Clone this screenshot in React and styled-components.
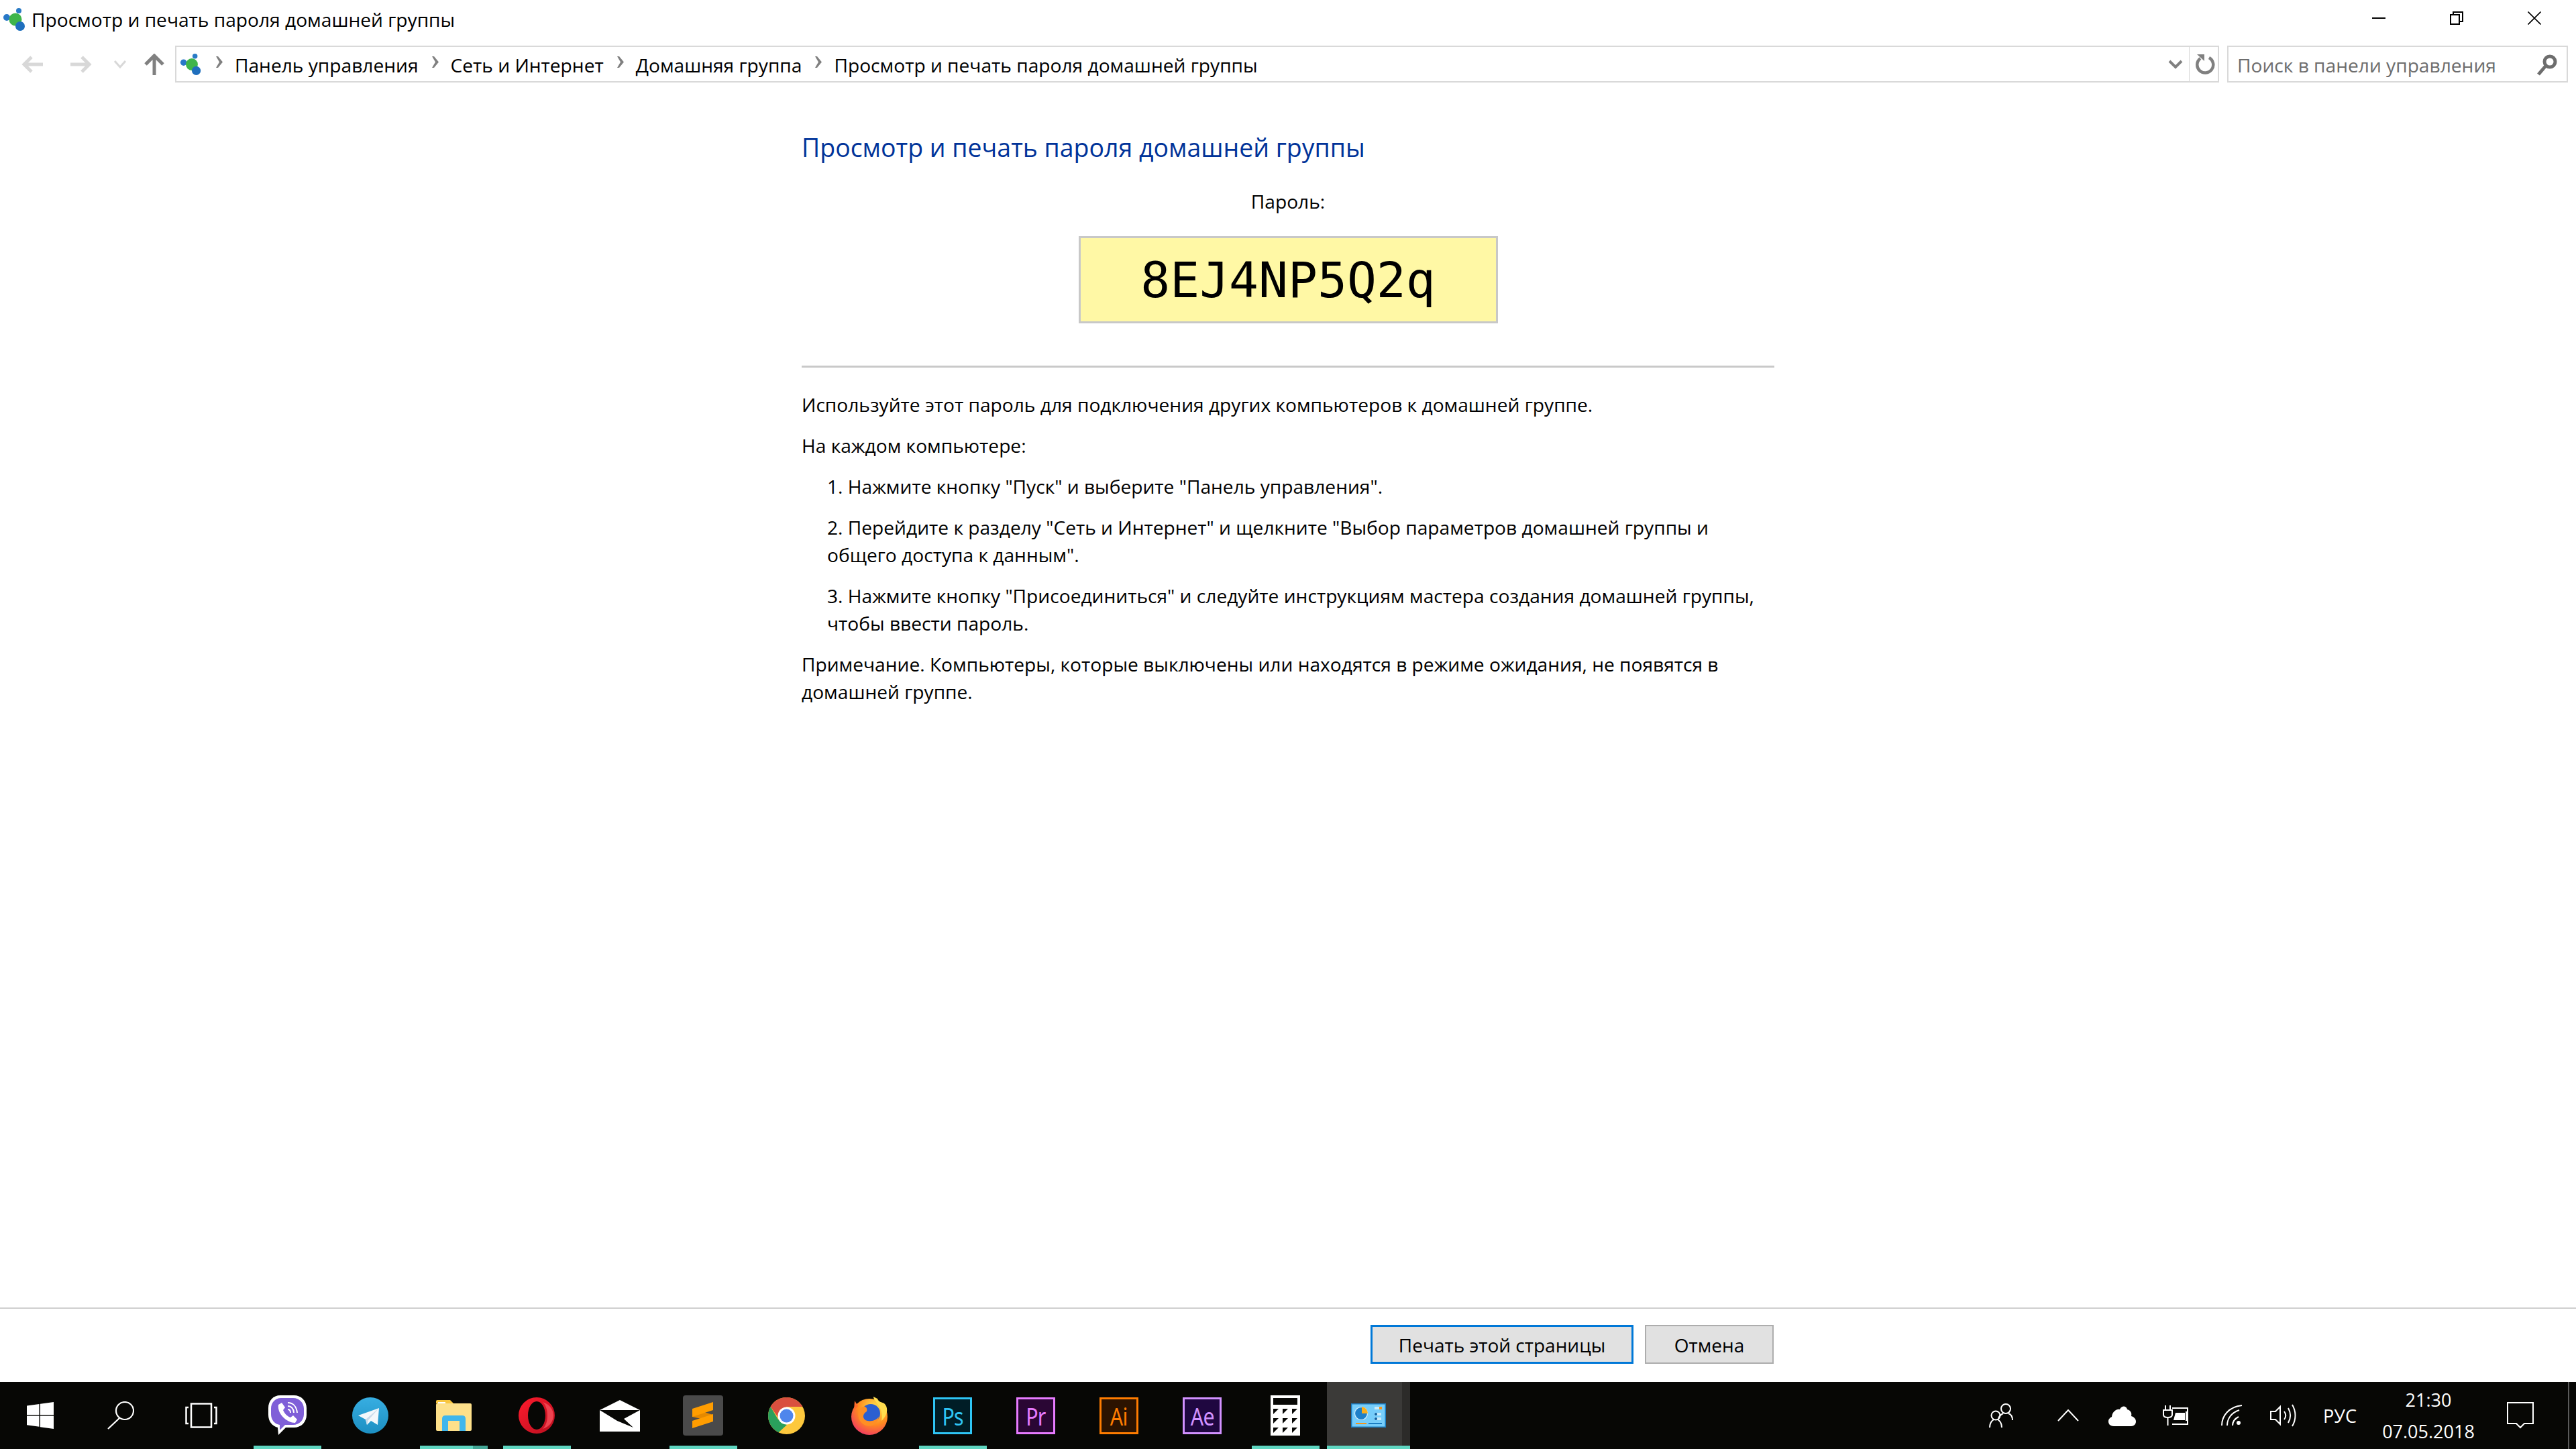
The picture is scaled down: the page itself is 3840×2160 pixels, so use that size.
import styled, { createGlobalStyle } from "styled-components";

const GlobalStyle = createGlobalStyle`
  html, body {
    margin: 0;
    padding: 0;
    background: #fff;
  }
  body {
    font-family: "Open Sans", "Noto Sans", sans-serif;
    color: #000;
  }
`;

const Page = styled.div`
  width: 3840px;
  height: 2160px;
  display: flex;
  flex-direction: column;
  overflow: hidden;
  background: #fff;
`;

const TitleBar = styled.header`
  height: 68px;
  display: flex;
  align-items: flex-start;
  padding-left: 4px;
  box-sizing: border-box;
`;

const TitleIcon = styled.div`
  height: 58px;
  display: flex;
  align-items: center;
`;

const TitleText = styled.div`
  margin-left: 7px;
  height: 58px;
  line-height: 58px;
  font-size: 28.15px;
`;

const WindowButtons = styled.div`
  margin-left: auto;
  display: flex;
  height: 54px;
  padding-right: 4px;
`;

const WindowButton = styled.div`
  width: 116px;
  height: 54px;
  display: flex;
  align-items: center;
  justify-content: center;
`;

const AddressRow = styled.nav`
  height: 55px;
  display: flex;
  align-items: stretch;
  padding-right: 12px;
`;

const NavIcons = styled.div`
  width: 261px;
  display: flex;
  align-items: center;
  padding-left: 32px;
  box-sizing: border-box;
`;

const AddressBox = styled.div`
  width: 3047px;
  box-sizing: border-box;
  display: flex;
  align-items: center;
  border: 2px solid #d9d9d9;
  padding-left: 5px;
`;

const Crumbs = styled.div`
  display: flex;
  align-items: center;
  flex: 1;
  font-size: 28.15px;
`;

const CrumbText = styled.span`
  white-space: nowrap;
  padding-top: 2px;
`;

const CrumbSep = styled.div`
  display: flex;
  margin: -6px 17px 0 19px;
`;

const AddressEnd = styled.div`
  height: 100%;
  width: 37px;
  padding-left: 5px;
  display: flex;
  align-items: center;
  justify-content: center;
  border-left: 1px solid #d9d9d9;
`;

const SearchBox = styled.div`
  width: 508px;
  margin-left: 12px;
  box-sizing: border-box;
  display: flex;
  align-items: center;
  justify-content: space-between;
  border: 2px solid #d9d9d9;
  padding: 2px 14px 0 13px;
  color: #6d6d6d;
  font-size: 28.15px;
  white-space: nowrap;
`;

const Content = styled.main`
  flex: 1;
  width: 1450px;
  margin: 0 auto;
  font-size: 28.15px;
  line-height: 41px;
`;

const Heading = styled.h1`
  margin: 72px 0 0;
  font-weight: 400;
  font-size: 37.45px;
  line-height: 50px;
  color: #003399;
`;

const PasswordLabel = styled.div`
  margin-top: 35px;
  text-align: center;
`;

const PasswordBox = styled.div`
  width: 625px;
  height: 130px;
  margin: 31px auto 0;
  box-sizing: border-box;
  border: 3px solid #c8c8c8;
  background: #fff8a5;
  display: flex;
  align-items: center;
  justify-content: center;
  font-family: "DejaVu Sans Mono", monospace;
  font-size: 73px;
`;

const Divider = styled.hr`
  margin: 63px 0 0;
  height: 3px;
  border: 0;
  background: #c9c9c9;
`;

const Paragraph = styled.p`
  margin: ${(p) => p.$top || 20}px 0 0;
  white-space: nowrap;
`;

const Steps = styled.ol`
  margin: 20px 0;
  padding: 0;
  list-style: none;
`;

const Step = styled.li`
  margin-top: 20px;
  padding-left: 38px;
  white-space: nowrap;
`;

const Footer = styled.footer`
  height: 111px;
  box-sizing: border-box;
  border-top: 2px solid #cfcfcf;
  display: flex;
  justify-content: flex-end;
  gap: 17px;
  padding: 24px 1196px 0 0;
`;

const Button = styled.div`
  width: ${(p) => p.$width}px;
  height: 58px;
  box-sizing: border-box;
  display: flex;
  align-items: center;
  justify-content: center;
  padding-top: 2px;
  background: #e1e1e1;
  border: ${(p) => (p.$focused ? "3px solid #0078d7" : "2px solid #adadad")};
  font-size: 28px;
`;

const Taskbar = styled.div`
  height: 100px;
  display: flex;
  background: #070705;
  color: #fff;
`;

const SystemButton = styled.div`
  width: 120px;
  display: flex;
  align-items: center;
  justify-content: center;
`;

const TaskButtons = styled.div`
  display: flex;
  margin-left: 6px;
`;

const TaskButton = styled.div`
  position: relative;
  width: 124px;
  display: flex;
  align-items: center;
  justify-content: center;
  background: ${(p) =>
    p.$active
      ? "linear-gradient(to right, #3b3a38 0 112px, #2c2b29 112px)"
      : "transparent"};
  &::after {
    content: "";
    display: ${(p) => (p.$running ? "block" : "none")};
    position: absolute;
    left: ${(p) => (p.$active ? 0 : 12)}px;
    right: ${(p) => (p.$active ? 0 : 11)}px;
    bottom: 0;
    height: 5px;
    background: ${(p) =>
      p.$stacked
        ? "linear-gradient(to right, #5fd6c1 0 79px, #43a696 79px)"
        : "#5fd6c1"};
  }
`;

const AdobeTile = styled.div`
  width: 58px;
  height: 55px;
  box-sizing: border-box;
  border: 3px solid ${(p) => p.$accent};
  background: ${(p) => p.$bg};
  color: ${(p) => p.$accent};
  display: flex;
  align-items: center;
  justify-content: center;
  font-family: "Noto Sans", sans-serif;
  font-size: 37px;
`;

const AdobeLabel = styled.span`
  transform: scaleX(0.82);
  letter-spacing: -1px;
`;

const Tray = styled.div`
  margin-left: auto;
  display: flex;
`;

const TrayItem = styled.div`
  width: ${(p) => p.$w}px;
  box-sizing: border-box;
  padding-left: ${(p) => p.$pad || 0}px;
  margin-right: ${(p) => p.$gap || 0}px;
  display: flex;
  flex-direction: column;
  align-items: center;
  justify-content: center;
  font-size: 27px;
  white-space: nowrap;
`;

const ClockLine = styled.div`
  line-height: 47px;
`;

const ShowDesktop = styled.div`
  width: 10px;
  margin-left: 21px;
  border-left: 2px solid #5a5a5a;
`;

const HomeGroupIcon = ({ size = 36 }) => (
  <svg width={size} height={size} viewBox="0 0 36 36">
    <circle cx="6" cy="15" r="5" fill="#2878c8" />
    <circle cx="19" cy="18" r="9.5" fill="#3fb54a" />
    <circle cx="24" cy="5" r="4" fill="#2a7bc6" />
    <circle cx="26" cy="28" r="7" fill="#1f6fbd" />
  </svg>
);

const CrumbChevron = () => (
  <svg width="12" height="17" viewBox="0 0 12 17">
    <path d="M1 0 L4 0 L11 8.5 L4 17 L1 17 L6 8.5 Z" fill="#808080" />
  </svg>
);

const WindowsLogo = () => (
  <svg width="40" height="40" viewBox="0 0 40 40" fill="#fff">
    <path d="M0 5.5 L18.5 3 V19 H0 Z M20 2.7 L40 0 V19 H20 Z M0 20.5 H18.5 V36.8 L0 34.3 Z M20 20.5 H40 V40 L20 37.2 Z" />
  </svg>
);

const SearchGlyph = () => (
  <svg width="40" height="42" viewBox="0 0 40 42" fill="none" stroke="#fff" strokeWidth="2.2">
    <ellipse cx="26" cy="14" rx="13" ry="13" />
    <path d="M18 25 L1 41" />
  </svg>
);

const TaskViewGlyph = () => (
  <svg width="48" height="38" viewBox="0 0 48 38" fill="none" stroke="#fff" strokeWidth="2.5">
    <rect x="9" y="1.5" width="30" height="35" />
    <path d="M5 7 H1.5 V31 H5 M43 7 H46.5 V31 H43" />
  </svg>
);

const ViberIcon = () => (
  <svg width="57" height="60" viewBox="0 0 57 60">
    <path
      d="M18 0 H38 C49 0 57 8 57 19 V29 C57 40 49 48 38 48 H26 L15 59 L14 48 C6 46 0 39 0 29 V19 C0 8 7 0 18 0 Z"
      fill="#fff"
    />
    <path
      d="M19 4 H37 C46 4 53 11 53 20 V28 C53 37 46 44 37 44 H25 L17 52 L17 44 C9 43 4 36 4 28 V20 C4 11 10 4 19 4 Z"
      fill="#7f5fd8"
    />
    <path
      d="M15 14 L20 11 L25 18 L22 22 C24 27 28 31 33 33 L37 30 L43 36 L40 41 C28 41 13 28 15 14 Z"
      fill="#fff"
    />
    <path
      d="M29 11 C37 11 42 17 43 26 M29 16 C34 16 38 20 38 26 M29 21 C32 21 33 23 33 26"
      fill="none"
      stroke="#fff"
      strokeWidth="2"
    />
  </svg>
);

const TelegramIcon = () => (
  <svg width="54" height="54" viewBox="0 0 54 54">
    <defs>
      <linearGradient id="tg" x1="0" y1="0" x2="0" y2="1">
        <stop offset="0" stopColor="#37aee2" />
        <stop offset="1" stopColor="#1c8fc2" />
      </linearGradient>
    </defs>
    <circle cx="27" cy="27" r="27" fill="url(#tg)" />
    <path d="M40 16 L9 27 L20 33 L22 41 L28 35 L38 41 Z" fill="#f2f7fb" />
    <path d="M40 16 L20 33 L22 41 L24 34 Z" fill="#c8daea" />
  </svg>
);

const ExplorerIcon = () => (
  <svg width="53" height="46" viewBox="0 0 53 46">
    <path d="M0 2 Q0 0 2 0 H21 L26 5 H0 Z" fill="#f8c63f" />
    <rect x="0" y="5" width="53" height="41" rx="2" fill="#fde08a" />
    <rect x="3" y="3" width="11" height="2" fill="#fff" />
    <path
      d="M9 46 V28 Q9 23 14 23 H39 Q44 23 44 28 V46 H35 V31 H18 V46 Z"
      fill="#3fb6ec"
    />
  </svg>
);

const OperaIcon = () => (
  <svg width="54" height="54" viewBox="0 0 54 54">
    <defs>
      <linearGradient id="op" x1="0" y1="0" x2="1" y2="1">
        <stop offset="0" stopColor="#ff1b2d" />
        <stop offset="1" stopColor="#b80f1f" />
      </linearGradient>
    </defs>
    <path
      fillRule="evenodd"
      d="M27 0 A27 27 0 1 1 27 54 A27 27 0 1 1 27 0 Z M27 6 C20 6 14 15 14 27 C14 39 20 48 27 48 C34 48 40 39 40 27 C40 15 34 6 27 6 Z"
      fill="url(#op)"
    />
    <path d="M36 7 C41 12 43 19 43 27 C43 35 41 42 36 47 C48 43 52 34 52 27 C52 20 48 11 36 7 Z" fill="#ee4350" />
  </svg>
);

const MailIcon = () => (
  <svg width="60" height="47" viewBox="0 0 60 47">
    <path d="M30 0 L60 15 V47 H0 V15 Z" fill="#fff" />
    <path d="M0 15 H60 L36 28 L50 41 L26 31 Z" fill="#070705" />
  </svg>
);

const SublimeIcon = () => (
  <svg width="60" height="60" viewBox="0 0 60 60">
    <rect width="60" height="60" rx="4" fill="#4a4a4a" />
    <path d="M14 32 V20 L45 29 V39 Z" fill="#e58900" />
    <path d="M14 20 L45 10 V22 L14 32 Z" fill="#ff9d00" />
    <path d="M14 38 L45 28 V39 L14 49 Z" fill="#ff9d00" />
  </svg>
);

const ChromeIcon = () => (
  <svg width="55" height="55" viewBox="0 0 55 55">
    <circle cx="27.5" cy="27.5" r="27.5" fill="#fdc83d" />
    <path d="M3.6 14 A27.5 27.5 0 0 1 51.4 14 H27.5 L15 30 Z" fill="#d9503f" />
    <path d="M3.6 14 L15 33 L28 41 L15.7 52.3 A27.5 27.5 0 0 1 3.6 14 Z" fill="#2aa05c" />
    <circle cx="27.5" cy="27.5" r="13" fill="#fff" />
    <circle cx="27.5" cy="27.5" r="10" fill="#4f86ec" />
  </svg>
);

const FirefoxIcon = () => (
  <svg width="56" height="57" viewBox="0 0 56 57">
    <defs>
      <radialGradient id="ff" cx="0.65" cy="0.25" r="0.85">
        <stop offset="0" stopColor="#ffe14a" />
        <stop offset="0.55" stopColor="#ff8a1f" />
        <stop offset="1" stopColor="#f0306a" />
      </radialGradient>
    </defs>
    <circle cx="28" cy="30" r="27" fill="url(#ff)" />
    <path d="M6 6 L11 14 L5 20 Z" fill="#ff6a2b" />
    <circle cx="30" cy="25" r="14" fill="#2c5fd0" />
    <path d="M12 20 C20 10 26 16 24 22 C20 24 16 30 22 35 C28 38 38 36 42 30 C40 46 22 48 14 36 C11 32 11 25 12 20 Z" fill="#ff8f24" />
    <path d="M34 0 C34 8 50 14 46 36 C55 28 57 16 50 10 C46 8 42 8 40 3 Z" fill="#ffdc4e" />
  </svg>
);

const CalculatorIcon = () => {
  const cells = [4, 18, 32].flatMap((x) => [20, 34, 48].map((y) => [x, y]));
  return (
    <svg width="44" height="60" viewBox="0 0 44 60">
      <rect width="44" height="60" fill="#fff" />
      <rect x="4" y="4" width="36" height="10" fill="#070705" />
      {cells.map(([x, y]) => (
        <path key={`${x}-${y}`} d={`M${x} ${y} h8 l-8 8 Z`} fill="#070705" />
      ))}
    </svg>
  );
};

const ControlPanelIcon = () => (
  <svg width="52" height="36" viewBox="0 0 52 36">
    <rect x="0.75" y="0.75" width="50.5" height="34.5" fill="#76cdfa" stroke="#1a7dc2" strokeWidth="1.5" />
    <circle cx="15" cy="15" r="9.5" fill="#1f80c8" stroke="#d5effc" strokeWidth="1.2" />
    <path d="M16 5 A10 10 0 0 1 25 15 H16 Z" fill="#f8ae1c" />
    <rect x="35" y="5" width="10" height="4" fill="#c8ebfb" />
    <rect x="42" y="5" width="4" height="4" fill="#f2951c" />
    <rect x="35" y="14" width="10" height="4" fill="#c8ebfb" />
    <rect x="35" y="21" width="10" height="4" fill="#c8ebfb" />
    <circle cx="37" cy="16" r="2" fill="#125f9e" />
    <circle cx="37" cy="23" r="2" fill="#125f9e" />
    <rect x="7" y="29" width="16" height="2" fill="#f2951c" />
    <rect x="26" y="29" width="20" height="2" fill="#1a7dc2" />
  </svg>
);

const TrayGlyph = ({ w, h, children, fill = "none" }) => (
  <svg width={w} height={h} viewBox={`0 0 ${w} ${h}`} fill={fill} stroke={fill === "none" ? "#fff" : "none"} strokeWidth="2">
    {children}
  </svg>
);

const Adobe = ({ accent, bg, label }) => (
  <AdobeTile $accent={accent} $bg={bg}>
    <AdobeLabel>{label}</AdobeLabel>
  </AdobeTile>
);

const tasks = [
  { key: "viber", icon: <ViberIcon />, running: true },
  { key: "telegram", icon: <TelegramIcon /> },
  { key: "explorer", icon: <ExplorerIcon />, running: true, stacked: true },
  { key: "opera", icon: <OperaIcon />, running: true },
  { key: "mail", icon: <MailIcon /> },
  { key: "sublime", icon: <SublimeIcon />, running: true },
  { key: "chrome", icon: <ChromeIcon /> },
  { key: "firefox", icon: <FirefoxIcon /> },
  { key: "ps", icon: <Adobe accent="#2fc5f5" bg="#001d26" label="Ps" />, running: true },
  { key: "pr", icon: <Adobe accent="#e77bff" bg="#2a0634" label="Pr" /> },
  { key: "ai", icon: <Adobe accent="#ff7c00" bg="#2c1300" label="Ai" /> },
  { key: "ae", icon: <Adobe accent="#d291ff" bg="#1f0740" label="Ae" /> },
  { key: "calc", icon: <CalculatorIcon />, running: true },
  { key: "cp", icon: <ControlPanelIcon />, running: true, active: true },
];

const crumbs = [
  "Панель управления",
  "Сеть и Интернет",
  "Домашняя группа",
  "Просмотр и печать пароля домашней группы",
];

function CrumbLink({ text, last }) {
  return (
    <>
      <CrumbText>{text}</CrumbText>
      {!last && (
        <CrumbSep>
          <CrumbChevron />
        </CrumbSep>
      )}
    </>
  );
}

export default function App() {
  return (
    <Page>
      <GlobalStyle />
      <TitleBar>
        <TitleIcon>
          <HomeGroupIcon />
        </TitleIcon>
        <TitleText>Просмотр и печать пароля домашней группы</TitleText>
        <WindowButtons>
          <WindowButton>
            <svg width="20" height="2" viewBox="0 0 20 2">
              <rect width="20" height="2" fill="#000" />
            </svg>
          </WindowButton>
          <WindowButton>
            <svg width="20" height="20" viewBox="0 0 20 20" fill="none" stroke="#000" strokeWidth="2">
              <rect x="1" y="5" width="13" height="14" />
              <path d="M5 5 V1 H19 V15 H14" />
            </svg>
          </WindowButton>
          <WindowButton>
            <svg width="20" height="20" viewBox="0 0 20 20" fill="none" stroke="#000" strokeWidth="1.6">
              <path d="M0.5 0.5 L19.5 19.5 M19.5 0.5 L0.5 19.5" />
            </svg>
          </WindowButton>
        </WindowButtons>
      </TitleBar>

      <AddressRow>
        <NavIcons>
          <svg width="32" height="32" viewBox="0 0 32 32" fill="none" stroke="#d8d8d8" strokeWidth="5">
            <path d="M15 5 L4 16 L15 27 M4 16 H32" />
          </svg>
          <svg width="32" height="32" viewBox="0 0 32 32" style={{ marginLeft: 41 }} fill="none" stroke="#d8d8d8" strokeWidth="5">
            <path d="M17 5 L28 16 L17 27 M28 16 H0" />
          </svg>
          <svg width="20" height="12" viewBox="0 0 20 12" style={{ marginLeft: 32 }} fill="none" stroke="#d8d8d8" strokeWidth="3">
            <path d="M2 1 L10 10 L18 1" />
          </svg>
          <svg width="30" height="32" viewBox="0 0 30 32" style={{ marginLeft: 26 }} fill="none" stroke="#808080" strokeWidth="5">
            <path d="M2 16 L15 3 L28 16 M15 3 V32" />
          </svg>
        </NavIcons>
        <AddressBox>
          <Crumbs>
            <HomeGroupIcon size={34} />
            <CrumbSep>
              <CrumbChevron />
            </CrumbSep>
            {crumbs.map((c, i) => (
              <CrumbLink key={c} text={c} last={i === crumbs.length - 1} />
            ))}
          </Crumbs>
          <svg width="22" height="14" viewBox="0 0 22 14" style={{ marginRight: 9 }} fill="none" stroke="#808080" strokeWidth="4">
            <path d="M2 2 L11 11 L20 2" />
          </svg>
          <AddressEnd>
            <svg width="30" height="32" viewBox="0 0 30 32" fill="none" stroke="#808080" strokeWidth="4.5">
              <path d="M20 6 A12 12 0 1 1 7 7" />
              <path d="M2 1 H13 V11 Z" fill="#808080" stroke="none" />
            </svg>
          </AddressEnd>
        </AddressBox>
        <SearchBox>
          Поиск в панели управления
          <svg width="30" height="32" viewBox="0 0 30 32" fill="none" stroke="#6d6d6d" strokeWidth="5">
            <circle cx="19" cy="11" r="8" />
            <path d="M13 17 L2 30" />
          </svg>
        </SearchBox>
      </AddressRow>

      <Content>
        <Heading>Просмотр и печать пароля домашней группы</Heading>
        <PasswordLabel>Пароль:</PasswordLabel>
        <PasswordBox>8EJ4NP5Q2q</PasswordBox>
        <Divider />
        <Paragraph $top={35}>
          Используйте этот пароль для подключения других компьютеров к домашней группе.
        </Paragraph>
        <Paragraph>На каждом компьютере:</Paragraph>
        <Steps>
          <Step>1. Нажмите кнопку "Пуск" и выберите "Панель управления".</Step>
          <Step>
            2. Перейдите к разделу "Сеть и Интернет" и щелкните "Выбор параметров домашней группы и
            <br />
            общего доступа к данным".
          </Step>
          <Step>
            3. Нажмите кнопку "Присоединиться" и следуйте инструкциям мастера создания домашней группы,
            <br />
            чтобы ввести пароль.
          </Step>
        </Steps>
        <Paragraph>
          Примечание. Компьютеры, которые выключены или находятся в режиме ожидания, не появятся в
          <br />
          домашней группе.
        </Paragraph>
      </Content>

      <Footer>
        <Button $width={392} $focused>
          Печать этой страницы
        </Button>
        <Button $width={192}>Отмена</Button>
      </Footer>

      <Taskbar>
        <SystemButton>
          <WindowsLogo />
        </SystemButton>
        <SystemButton>
          <SearchGlyph />
        </SystemButton>
        <SystemButton>
          <TaskViewGlyph />
        </SystemButton>
        <TaskButtons>
          {tasks.map((t) => (
            <TaskButton key={t.key} $running={t.running} $active={t.active} $stacked={t.stacked}>
              {t.icon}
            </TaskButton>
          ))}
        </TaskButtons>
        <Tray>
          <TrayItem $w={80} $gap={20}>
            <TrayGlyph w={36} h={38}>
              <circle cx="25" cy="9" r="7" />
              <path d="M14 24 C15 19 19 17 21 16 M29 16 C32 17 35 20 35 26" />
              <circle cx="10" cy="19" r="6.5" />
              <path d="M1 37 C1 31 4 27 7 25 M13 25 C16 27 19 31 19 37" />
            </TrayGlyph>
          </TrayItem>
          <TrayItem $w={80}>
            <TrayGlyph w={32} h={18}>
              <path d="M1 17 L16 1 L31 17" />
            </TrayGlyph>
          </TrayItem>
          <TrayItem $w={80}>
            <TrayGlyph w={41} h={32} fill="#fff">
              <path d="M8 32 C2 32 0 28 0 25 C0 21 3 19 5 18 C6 10 12 6 17 7 C19 1 27 1 28 7 C34 9 35 13 34 17 C38 18 41 21 41 25 C41 29 38 32 34 32 Z" />
            </TrayGlyph>
          </TrayItem>
          <TrayItem $w={80}>
            <TrayGlyph w={40} h={30}>
              <path d="M5 0 V7 M12 0 V7 M2 7 H15 V14 C15 17 12 18 8.5 18 C5 18 2 17 2 14 Z M8.5 18 V30" />
              <path d="M15 4 H38 V28 H15 M36 9 V23" />
              <path d="M17 22 L20 11 H34 V22 Z" fill="#fff" stroke="none" />
            </TrayGlyph>
          </TrayItem>
          <TrayItem $w={80} $pad={8}>
            <TrayGlyph w={32} h={32}>
              <path d="M1 31 C1 17 11 3 31 1 M9 31 C9 21 15 12 27 8 M17 31 C17 26 20 21 26 18" />
              <circle cx="26" cy="27" r="3" fill="#fff" stroke="none" />
            </TrayGlyph>
          </TrayItem>
          <TrayItem $w={80}>
            <TrayGlyph w={40} h={34}>
              <path d="M2 11 H9 L16 4 V30 L9 23 H2 Z" />
              <path d="M22 11 C25 15 25 19 22 23 M28 6 C32 13 32 21 28 28 M34 1 C40 11 40 23 34 33" />
            </TrayGlyph>
          </TrayItem>
          <TrayItem $w={90}>РУС</TrayItem>
          <TrayItem $w={174}>
            <ClockLine>21:30</ClockLine>
            <ClockLine>07.05.2018</ClockLine>
          </TrayItem>
          <TrayItem $w={100}>
            <TrayGlyph w={40} h={40}>
              <path d="M1 1 H39 V32 H26 L20 38 L14 32 H1 Z" />
            </TrayGlyph>
          </TrayItem>
          <ShowDesktop />
        </Tray>
      </Taskbar>
    </Page>
  );
}
